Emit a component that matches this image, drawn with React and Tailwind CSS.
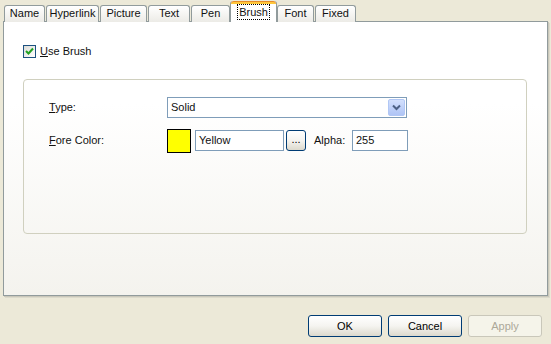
import React from "react";

const font = { fontFamily: '"Liberation Sans", Arial, sans-serif' };

function Tab({ label, w, ml, selected }) {
  if (selected) {
    return (
      <div
        className={`${ml} relative flex h-[21px] flex-col self-end rounded-t-[3px] border-x border-[#919B9C] bg-white`}
        style={{ width: w }}
      >
        <div className="h-[3px] rounded-t-[3px] bg-[#FFC83C] border-t border-[#E68B2C]" />
        <div className="flex flex-1 items-start justify-center">
          <span className="border border-dotted border-black px-[1px] leading-[14px]">{label}</span>
        </div>
      </div>
    );
  }
  return (
    <div
      className={`${ml} flex h-[17px] items-center justify-center rounded-t-[3px] border-x border-t border-[#919B9C] bg-gradient-to-b from-white to-[#ECEBE6] pb-[1px] leading-[13px]`}
      style={{ width: w }}
    >
      {label}
    </div>
  );
}

function XPButton({ children, className = "", disabled }) {
  return (
    <div
      className={`flex items-center justify-center rounded-[3px] border ${
        disabled
          ? "border-[#C9C7BA] bg-[#F5F4EA] text-[#ACA899]"
          : "border-[#003C74] bg-gradient-to-b from-white via-[#F5F4F0] to-[#DCD9CD] text-black"
      } ${className}`}
    >
      {children}
    </div>
  );
}

export default function App() {
  return (
    <div
      className="flex h-[344px] w-[551px] flex-col bg-[#ECE9D8] text-[11px] text-[#111]"
      style={font}
    >
      {/* Tabs */}
      <div className="relative z-10 -mb-[1px] flex h-[22px] items-end pt-[1px]">
        <Tab label="Name" w={41} ml="ml-[4px]" />
        <Tab label="Hyperlink" w={53} ml="ml-[1px]" />
        <Tab label="Picture" w={47} ml="ml-[1px]" />
        <Tab label="Text" w={42} ml="ml-[1px]" />
        <Tab label="Pen" w={39} ml="ml-[1px]" />
        <Tab label="Brush" w={47} ml="ml-0" selected />
        <Tab label="Font" w={37} ml="ml-0" />
        <Tab label="Fixed" w={41} ml="ml-[1px]" />
      </div>

      {/* Page */}
      <div className="ml-[3px] h-[275px] w-[545px] border border-[#919B9C] bg-gradient-to-b from-white from-30% to-[#F4F3EE] shadow-[1px_1px_0_#C9C7BA,2px_2px_0_#DCDACB]">
        <div className="flex flex-col pl-[19px] pt-[21px]">
          <div className="flex items-center gap-[4px]">
            <div className="flex h-[13px] w-[13px] items-center justify-center border border-[#1C5180] bg-gradient-to-br from-[#DCDCD7] to-white">
              <svg width="9" height="9" viewBox="0 0 9 9">
                <path d="M1 4 L3.5 6.5 L8 1.5" fill="none" stroke="#21A121" strokeWidth="2" />
              </svg>
            </div>
            <span>
              <span className="underline">U</span>se Brush
            </span>
          </div>

          {/* Group box */}
          <div className="mt-[19px] flex h-[155px] w-[504px] flex-col rounded-[4px] border border-[#D0D0BF] pl-[25px] pt-[17px]">
            <div className="flex h-[21px] items-center">
              <div className="w-[118px]">
                <span className="underline">T</span>ype:
              </div>
              <div className="flex h-[21px] w-[240px] items-center justify-between border border-[#7F9DB9] bg-white pl-[3px] pr-[1px]">
                <span>Solid</span>
                <div className="flex h-[17px] w-[17px] items-center justify-center rounded-[2px] border border-[#B1C7F5] bg-gradient-to-b from-[#D3E0FD] to-[#AFC4F5]">
                  <svg width="9" height="7" viewBox="0 0 9 7">
                    <path d="M1 1.5 L4.5 5 L8 1.5" fill="none" stroke="#4D6185" strokeWidth="2" />
                  </svg>
                </div>
              </div>
            </div>

            <div className="mt-[11px] flex h-[24px] items-center">
              <div className="w-[118px]">
                <span className="underline">F</span>ore Color:
              </div>
              <div className="h-[24px] w-[24px] border border-black bg-[#FFFF00]" />
              <div className="ml-[4px] flex h-[21px] w-[89px] items-center border border-[#7F9DB9] bg-white pl-[3px]">
                Yellow
              </div>
              <XPButton className="ml-[2px] h-[21px] w-[20px] pb-[2px]">...</XPButton>
              <div className="ml-[8px] w-[38px]">Alpha:</div>
              <div className="flex h-[21px] w-[56px] items-center border border-[#7F9DB9] bg-white pl-[3px]">
                255
              </div>
            </div>
          </div>
        </div>
      </div>

      {/* Buttons */}
      <div className="mt-[19px] flex gap-[6px] pl-[308px]">
        <XPButton className="h-[22px] w-[74px]">OK</XPButton>
        <XPButton className="h-[22px] w-[74px]">Cancel</XPButton>
        <XPButton className="h-[22px] w-[74px]" disabled>
          Apply
        </XPButton>
      </div>
    </div>
  );
}
